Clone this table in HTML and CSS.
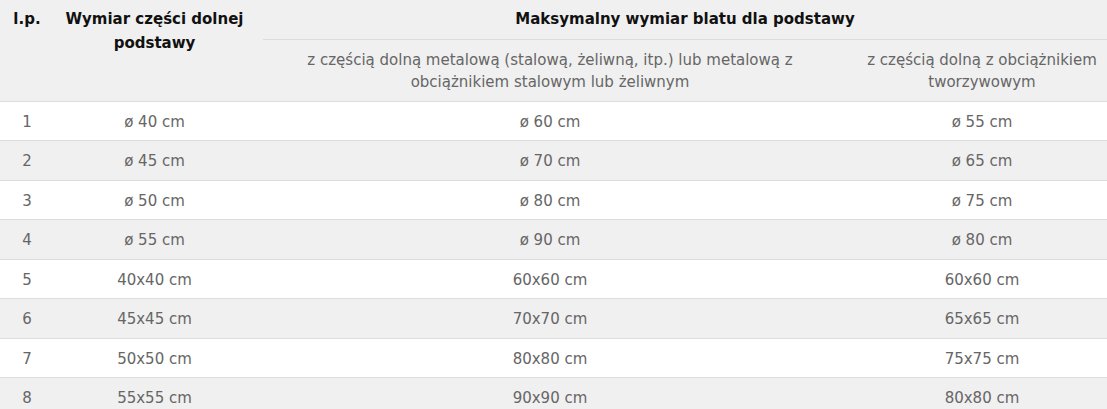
FILE: index.html
```html
<!DOCTYPE html>
<html lang="pl">
<head>
<meta charset="utf-8">
<title>Tabela wymiarów</title>
<link rel="stylesheet" href="styles.css">
</head>
<body>
<table class="sizes">
  <colgroup>
    <col class="c-lp">
    <col class="c-base">
    <col class="c-metal">
    <col class="c-plastic">
  </colgroup>
  <thead>
    <tr>
      <th class="h-main h-top" rowspan="2">l.p.</th>
      <th class="h-main h-top col-base" rowspan="2">Wymiar części dolnej podstawy</th>
      <th class="h-main h-group" colspan="2">Maksymalny wymiar blatu dla podstawy</th>
    </tr>
    <tr>
      <th class="h-sub col-metal">z częścią dolną metalową (stalową, żeliwną, itp.) lub metalową z obciążnikiem stalowym lub żeliwnym</th>
      <th class="h-sub col-plastic">z częścią dolną z obciążnikiem tworzywowym</th>
    </tr>
  </thead>
  <tbody>
    <tr><td>1</td><td class="col-base">ø 40 cm</td><td class="col-metal">ø 60 cm</td><td class="col-plastic">ø 55 cm</td></tr>
    <tr><td>2</td><td class="col-base">ø 45 cm</td><td class="col-metal">ø 70 cm</td><td class="col-plastic">ø 65 cm</td></tr>
    <tr><td>3</td><td class="col-base">ø 50 cm</td><td class="col-metal">ø 80 cm</td><td class="col-plastic">ø 75 cm</td></tr>
    <tr><td>4</td><td class="col-base">ø 55 cm</td><td class="col-metal">ø 90 cm</td><td class="col-plastic">ø 80 cm</td></tr>
    <tr><td>5</td><td class="col-base">40x40 cm</td><td class="col-metal">60x60 cm</td><td class="col-plastic">60x60 cm</td></tr>
    <tr><td>6</td><td class="col-base">45x45 cm</td><td class="col-metal">70x70 cm</td><td class="col-plastic">65x65 cm</td></tr>
    <tr><td>7</td><td class="col-base">50x50 cm</td><td class="col-metal">80x80 cm</td><td class="col-plastic">75x75 cm</td></tr>
    <tr><td>8</td><td class="col-base">55x55 cm</td><td class="col-metal">90x90 cm</td><td class="col-plastic">80x80 cm</td></tr>
  </tbody>
</table>
</body>
</html>
```
FILE: styles.css
```css
html, body {
  margin: 0;
  padding: 0;
  background: #ffffff;
}

.sizes {
  width: 1107px;
  border-collapse: collapse;
  table-layout: fixed;
  font-family: "DejaVu Sans", Verdana, sans-serif;
  font-size: 15px;
  color: #666666;
}

.c-lp { width: 54px; }
.c-base { width: 209px; }
.c-metal { width: 580px; }
.c-plastic { width: 264px; }

.sizes thead {
  background: #f0f0f0;
}

.sizes th {
  text-align: center;
}

.h-main {
  font-weight: bold;
  color: #111111;
  line-height: 24px;
}

.h-top {
  vertical-align: top;
  padding: 7px 8px 0;
  border-bottom: 1px solid #dddddd;
}

.h-group {
  height: 39px;
  box-sizing: border-box;
  padding: 7px 8px 7px;
  vertical-align: top;
  border-bottom: 1px solid #dddddd;
}

.h-sub {
  font-weight: normal;
  color: #666666;
  line-height: 22px;
  padding: 9px 8px 8px;
  border-bottom: 1px solid #dddddd;
}

.sizes td {
  text-align: center;
  line-height: 19.5px;
  padding: 11px 8px 8px;
  border-bottom: 1px solid #dddddd;
}

.sizes .col-base {
  padding-left: 4px;
  padding-right: 12px;
}

.sizes .col-metal {
  padding-left: 6px;
  padding-right: 12px;
}

.sizes .col-plastic {
  padding-left: 22px;
  padding-right: 8px;
}

.sizes tbody tr:nth-child(even) td {
  background: #f0f0f0;
}
```
